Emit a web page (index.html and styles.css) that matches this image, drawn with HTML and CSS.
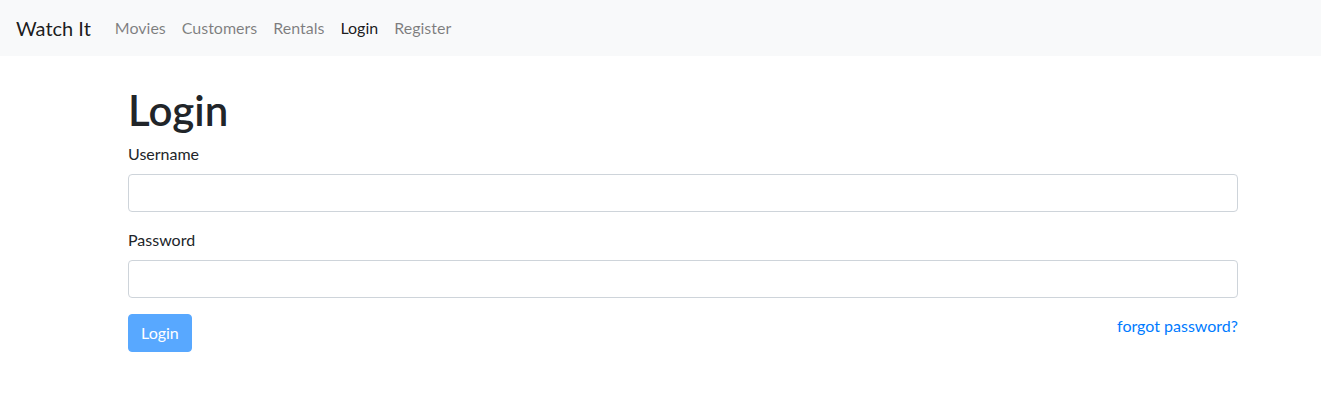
FILE: index.html
```html
<!DOCTYPE html>
<html lang="en">
<head>
<meta charset="utf-8">
<title>Watch It</title>
<link rel="stylesheet" href="styles.css">
</head>
<body>
<nav class="navbar">
  <a class="brand" href="#">Watch It</a>
  <ul class="nav">
    <li><a class="nav-link" href="#">Movies</a></li>
    <li><a class="nav-link" href="#">Customers</a></li>
    <li><a class="nav-link" href="#">Rentals</a></li>
    <li><a class="nav-link active" href="#">Login</a></li>
    <li><a class="nav-link" href="#">Register</a></li>
  </ul>
</nav>
<main class="container">
  <h1 class="title">Login</h1>
  <form class="form">
    <div class="form-group">
      <label class="label" for="username">Username</label>
      <input class="input" id="username" type="text">
    </div>
    <div class="form-group">
      <label class="label" for="password">Password</label>
      <input class="input" id="password" type="password">
    </div>
    <div class="actions">
      <button class="btn" type="submit" disabled>Login</button>
      <a class="forgot" href="#">forgot password?</a>
    </div>
  </form>
</main>
</body>
</html>
```
FILE: styles.css
```css
* { box-sizing: border-box; }
html, body { margin: 0; padding: 0; }
body {
  font-family: "Lato", "Open Sans", sans-serif;
  font-size: 16px;
  line-height: 1.5;
  color: #212529;
  background: #fff;
}
a { text-decoration: none; }
.navbar {
  display: flex;
  align-items: center;
  height: 56px;
  padding: 8px 16px;
  background: #f8f9fa;
}
.brand {
  font-size: 20px;
  line-height: 30px;
  padding: 5px 0;
  margin-right: 16px;
  color: rgba(0,0,0,.9);
}
.nav {
  display: flex;
  list-style: none;
  margin: 0;
  padding: 0;
}
.nav-link {
  display: block;
  padding: 8px;
  color: rgba(0,0,0,.5);
}
.nav-link.active { color: rgba(0,0,0,.9); }
.container {
  width: 1110px;
  margin-left: 128px;
  padding-top: 30px;
}
.title {
  font-size: 42px;
  font-weight: 600;
  line-height: 48px;
  margin: 0 0 8px;
}
.form-group { margin-bottom: 16px; }
.label {
  display: inline-block;
  margin-bottom: 8px;
}
.input {
  display: block;
  width: 100%;
  height: 38px;
  padding: 6px 12px;
  font: inherit;
  color: #495057;
  background: #fff;
  border: 1px solid #ced4da;
  border-radius: 4px;
}
.actions {
  display: flex;
  justify-content: space-between;
  align-items: flex-start;
}
.btn {
  font: inherit;
  height: 38px;
  padding: 6px 12px;
  color: #fff;
  background: #007bff;
  border: 1px solid #007bff;
  border-radius: 4px;
  opacity: .65;
}
.forgot { color: #007bff; }
```
